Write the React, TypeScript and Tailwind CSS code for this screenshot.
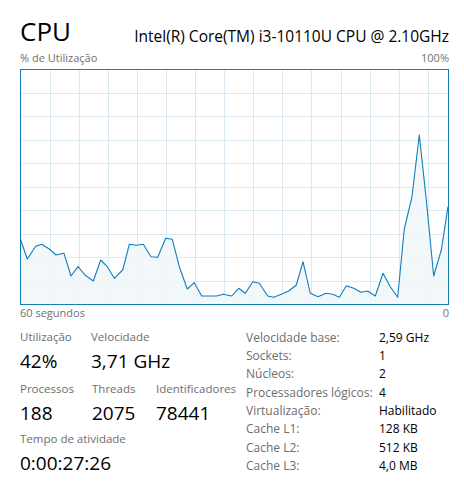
import React from 'react';

const points: [number, number][] = [
  [20, 237], [20.7, 240], [27.3, 259], [35.7, 246.3], [41.7, 244.3], [49.3, 249], [56, 255], [64, 253.3],
  [71, 276], [78, 266.7], [85, 275], [93.3, 281], [100.7, 260], [107.3, 266.7], [114.3, 278.3],
  [122.7, 270], [129.3, 244.3], [136.7, 245.3], [143.3, 244.3], [151, 256.7], [157.7, 257.3],
  [165.7, 238.3], [172.3, 239.3], [179.3, 266.7], [187.3, 289], [194.3, 282.7], [201.7, 296],
  [216.7, 296], [223.3, 294.3], [231.7, 296], [238.7, 288.3], [245.3, 293.3], [252.7, 281.7],
  [259.3, 283.3], [267.7, 296], [273.7, 297.3], [281.3, 294.3], [288.7, 291], [296.3, 285],
  [303, 261.7], [310.3, 293.3], [318, 296.7], [326, 293.3], [332.7, 294.3], [339.3, 297.3],
  [346.3, 285.7], [353.7, 288.3], [361, 292.3], [367.7, 291], [375.3, 296], [383, 273.3],
  [390.3, 286.7], [397.7, 297.3], [404.3, 229], [412, 196.7], [419.3, 135], [426.3, 200],
  [433.7, 276], [441.3, 250], [448, 206.7],
];

const line = points.map(([x, y]) => `${x},${y}`).join(' ');
const area = `20,304 ${line} 448,304`;

function Chart() {
  const vLines = Array.from({ length: 14 }, (_, k) => 49.5 + k * 29.1);
  const hLines = Array.from({ length: 9 }, (_, k) => 69.5 + (k + 1) * 23.45);
  return (
    <svg width="429" height="236" viewBox="20 69 429 236" className="block">
      <rect x="20" y="69" width="429" height="236" fill="#ffffff" />
      {vLines.map((x) => (
        <line key={x} x1={Math.round(x) + 0.5} y1="69" x2={Math.round(x) + 0.5} y2="305" stroke="#d9eaf4" />
      ))}
      {hLines.map((y) => (
        <line key={y} x1="20" y1={Math.round(y) + 0.5} x2="449" y2={Math.round(y) + 0.5} stroke="#d9eaf4" />
      ))}
      <polygon points={area} fill="#f1f6fa" fillOpacity="0.9" />
      <polyline points={line} fill="none" stroke="#117dbb" strokeWidth="1.1" strokeLinejoin="round" />
      <rect x="20.5" y="69.5" width="428" height="235" fill="none" stroke="#117dbb" />
    </svg>
  );
}

function Stat({ label, value }: { label: string; value: string }) {
  return (
    <div className="flex flex-col gap-[3px]">
      <span className="text-[11.5px] leading-[16px] text-[#6d6d6d] whitespace-nowrap">{label}</span>
      <span className="text-[19px] leading-[26px] text-black whitespace-nowrap">{value}</span>
    </div>
  );
}

const specs: [string, string][] = [
  ['Velocidade base:', '2,59 GHz'],
  ['Sockets:', '1'],
  ['Núcleos:', '2'],
  ['Processadores lógicos:', '4'],
  ['Virtualização:', 'Habilitado'],
  ['Cache L1:', '128 KB'],
  ['Cache L2:', '512 KB'],
  ['Cache L3:', '4,0 MB'],
];

export default function App() {
  return (
    <div
      className="w-[464px] h-[484px] bg-white pl-5 pt-[12px] overflow-hidden"
      style={{ fontFamily: '"Open Sans", "Noto Sans", sans-serif' }}
    >
      <div className="w-[429px]">
        <div className="flex items-end justify-between h-[34px]">
          <span className="text-[26px] leading-[30px] text-black">CPU</span>
          <span className="text-[15.5px] leading-[20px] text-black">Intel(R) Core(TM) i3-10110U CPU @ 2.10GHz</span>
        </div>
        <div className="flex justify-between text-[11px] leading-[23px] text-[#707070]">
          <span>% de Utilização</span>
          <span>100%</span>
        </div>
        <Chart />
        <div className="flex justify-between text-[11px] leading-[16px] text-[#707070]">
          <span>60 segundos</span>
          <span>0</span>
        </div>
      </div>

      <div className="flex mt-[8px]">
        <div className="w-[226px] flex flex-col">
          <div className="flex">
            <div className="w-[71px]"><Stat label="Utilização" value="42%" /></div>
            <Stat label="Velocidade" value="3,71 GHz" />
          </div>
          <div className="flex mt-[7px]">
            <div className="w-[72px]"><Stat label="Processos" value="188" /></div>
            <div className="w-[64px]"><Stat label="Threads" value="2075" /></div>
            <Stat label="Identificadores" value="78441" />
          </div>
          <div className="mt-[5px]">
            <Stat label="Tempo de atividade" value="0:00:27:26" />
          </div>
        </div>
        <div className="flex flex-col -mt-[1px]">
          {specs.map(([k, v]) => (
            <div key={k} className="flex h-[18.33px] items-center text-[12px] leading-[17px]">
              <span className="w-[133px] text-[#6d6d6d] whitespace-nowrap">{k}</span>
              <span className="text-black">{v}</span>
            </div>
          ))}
        </div>
      </div>
    </div>
  );
}
